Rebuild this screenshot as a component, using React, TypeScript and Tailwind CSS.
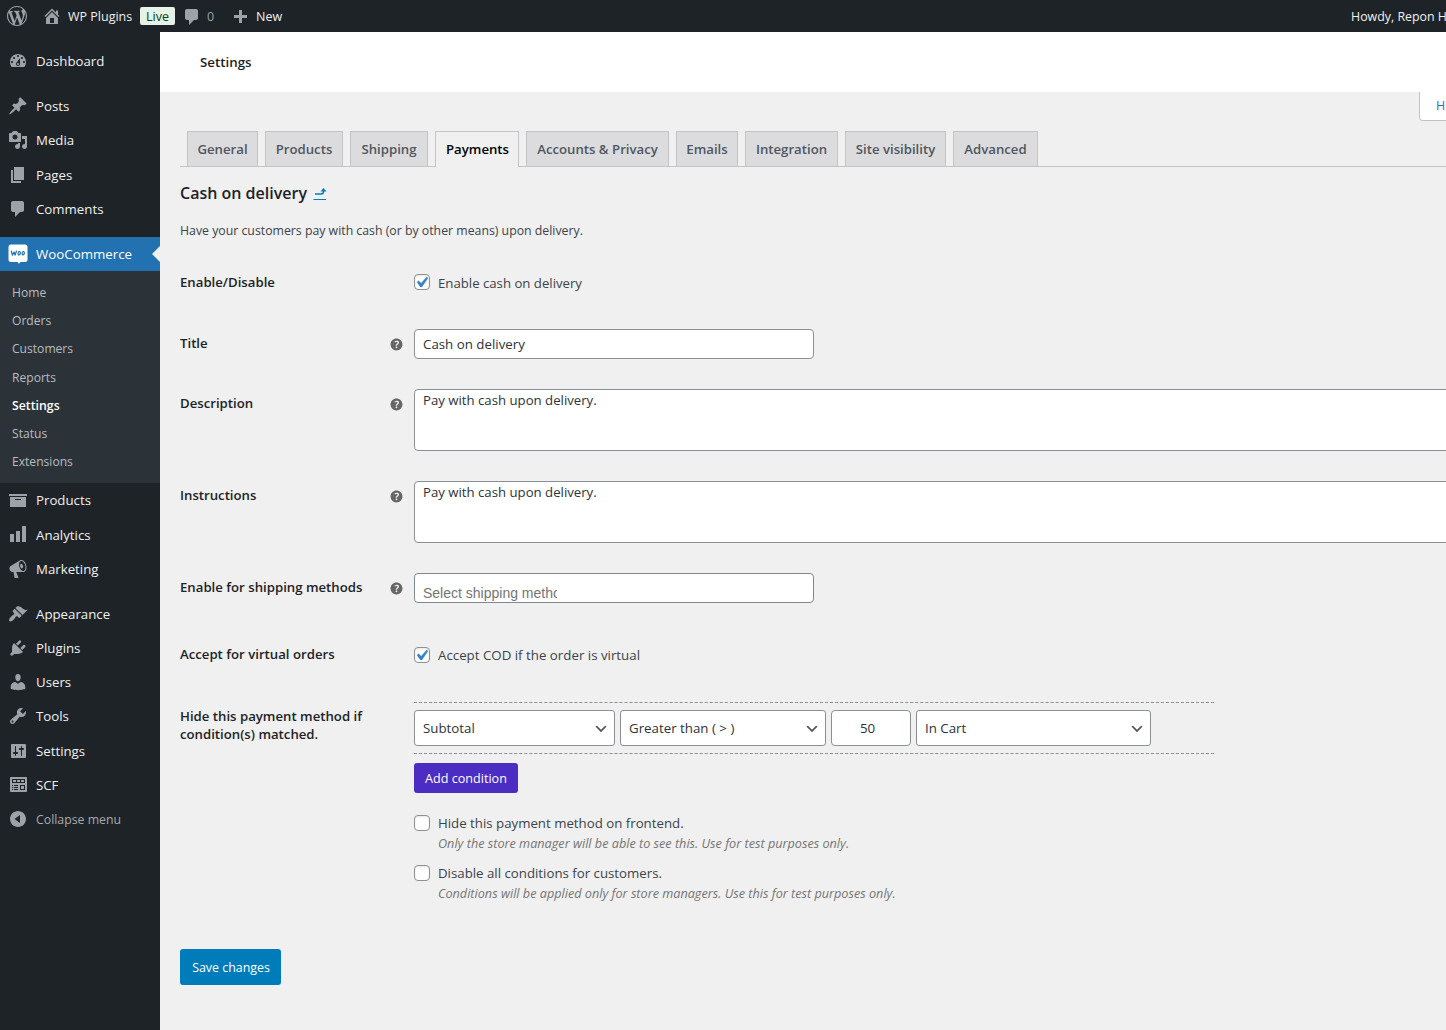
import React from 'react';
import clsx from 'clsx';

const ICONS = {
  wordpress:
    'M20 10c0-5.51-4.49-10-10-10C4.48 0 0 4.49 0 10c0 5.52 4.48 10 10 10 5.51 0 10-4.48 10-10zM7.78 15.37L4.37 6.22c.55-.02 1.17-.08 1.17-.08.5-.06.44-1.13-.06-1.11 0 0-1.45.11-2.37.11-.18 0-.37 0-.58-.01C4.12 2.69 6.87 1.11 10 1.11c2.33 0 4.45.87 6.05 2.34-.68-.11-1.65.39-1.65 1.58 0 .74.45 1.36.9 2.1.35.61.55 1.36.55 2.46 0 1.49-1.4 5-1.4 5l-3.03-8.37c.54-.02.82-.17.82-.17.5-.05.44-1.25-.06-1.22 0 0-1.44.12-2.38.12-.87 0-2.33-.12-2.33-.12-.5-.03-.56 1.2-.06 1.22l.92.08 1.26 3.41zM17.41 10c.24-.64.74-1.87.43-4.25.7 1.29 1.05 2.71 1.05 4.25 0 3.29-1.73 6.24-4.4 7.78.97-2.59 1.94-5.2 2.92-7.78zM6.1 18.09C3.12 16.65 1.11 13.53 1.11 10c0-1.3.23-2.48.72-3.59C3.25 10.3 4.67 14.2 6.1 18.09zm4.03-6.63l2.58 6.98c-.86.29-1.76.45-2.71.45-.79 0-1.57-.11-2.29-.33.81-2.38 1.62-4.74 2.42-7.1z',
  home: 'M16 8.5l1.53 1.53-1.06 1.06L10 4.6l-6.47 6.49-1.06-1.06L10 2.5l4 4v-2h2v4zm-6-2.46l6 5.99V18H4v-5.97zM12 17v-5H8v5h4z',
  comments: 'M5 2h9c1.1 0 2 .9 2 2v7c0 1.1-.9 2-2 2h-2l-5 5v-5H5c-1.1 0-2-.9-2-2V4c0-1.1.9-2 2-2z',
  plus: 'M17 9v3h-5v5H9v-5H4V9h5V4h3v5z',
  dashboard:
    'M3.76 16h12.48c1.1-1.37 1.76-3.11 1.76-5 0-4.42-3.58-8-8-8s-8 3.58-8 8c0 1.89.66 3.63 1.76 5zM10 4c.55 0 1 .45 1 1s-.45 1-1 1-1-.45-1-1 .45-1 1-1zM6 6c.55 0 1 .45 1 1s-.45 1-1 1-1-.45-1-1 .45-1 1-1zm8 0c.55 0 1 .45 1 1s-.45 1-1 1-1-.45-1-1 .45-1 1-1zm-5.37 5.55L12 7v6c0 1.1-.9 2-2 2s-2-.9-2-2c0-.57.24-1.08.63-1.45zM4 10c.55 0 1 .45 1 1s-.45 1-1 1-1-.45-1-1 .45-1 1-1zm12 0c.55 0 1 .45 1 1s-.45 1-1 1-1-.45-1-1 .45-1 1-1zm-5 3c0-.55-.45-1-1-1s-1 .45-1 1 .45 1 1 1 1-.45 1-1z',
  posts:
    'M10.44 3.02l1.82-1.82 6.36 6.35-1.83 1.82c-1.05-.68-2.48-.57-3.41.36l-.75.75c-.92.93-1.04 2.35-.35 3.41l-1.83 1.82-2.41-2.41-2.8 2.79c-.42.42-3.38 2.71-3.8 2.29s1.86-3.39 2.28-3.81l2.79-2.79L4.1 9.36l1.83-1.82c1.05.69 2.48.57 3.4-.36l.75-.75c.93-.92 1.05-2.35.36-3.41z',
  media:
    'M13 11V4c0-.55-.45-1-1-1h-1.67L9 1H5L3.67 3H2c-.55 0-1 .45-1 1v7c0 .55.45 1 1 1h10c.55 0 1-.45 1-1zM7 4.5c1.38 0 2.5 1.12 2.5 2.5S8.38 9.5 7 9.5 4.5 8.38 4.5 7 5.62 4.5 7 4.5zM14 6h5v10.5c0 1.38-1.12 2.5-2.5 2.5S14 17.88 14 16.5s1.12-2.5 2.5-2.5c.17 0 .34.02.5.05V9h-3V6zm-4 8.05V13h2v3.5c0 1.38-1.12 2.5-2.5 2.5S7 17.88 7 16.5 8.12 14 9.5 14c.17 0 .34.02.5.05z',
  pages: 'M6 15V2h10v13H6zm-1 1h8v2H3V5h2v11z',
  archive: 'M19 4v2H1V4h18zM2 7h16v10H2V7zm11 3V9H7v1h6z',
  chart: 'M18 18V2h-4v16h4zm-6 0V7H8v11h4zm-6 0v-8H2v8h4z',
  megaphone:
    'M18.15 5.94c.46 1.62.38 3.22-.02 4.48-.42 1.28-1.26 2.18-2.3 2.48-.16.06-.26.06-.4.06-.06.02-.12.02-.18.02-.06.02-.14.02-.22.02h-6.8l2.22 5.5c.02.14-.06.26-.14.34-.08.1-.24.16-.34.16H6.95c-.1 0-.26-.06-.34-.16-.08-.08-.16-.2-.14-.34l-1-5.5H4.25l-.02-.02c-.5.06-1.08-.18-1.54-.62s-.88-1.08-1.06-1.88c-.24-.8-.2-1.56-.02-2.2.18-.62.58-1.08 1.06-1.3l.02-.02 9-5.4c.1-.06.18-.1.24-.16.06-.04.14-.08.24-.12.16-.08.28-.12.5-.18 1.04-.3 2.24.1 3.22.98s1.84 2.24 2.26 3.86zm-2.58 5.98h-.02c.4-.1.74-.34 1.04-.7.58-.7.86-1.76.86-3.04 0-.64-.1-1.3-.28-1.98-.34-1.36-1.02-2.5-1.78-3.24s-1.68-1.1-2.46-.88c-.82.22-1.4.96-1.7 2-.32 1.04-.28 2.36.06 3.72.38 1.36 1 2.5 1.8 3.24.78.74 1.62 1.1 2.48.88zm-2.54-7.08c.22-.04.42-.02.62.04.38.16.76.48 1.02 1s.42 1.2.42 1.78c0 .3-.04.56-.12.8-.18.48-.44.84-.86.94-.34.1-.8-.06-1.14-.4s-.64-.86-.78-1.5c-.18-.62-.12-1.24.02-1.72s.48-.84.82-.94z',
  appearance:
    'M14.48 11.06L7.41 3.99l1.5-1.5c.5-.56 2.3-.47 3.51.32 1.21.8 1.43 1.28 2.91 2.1 1.18.64 2.45 1.26 4.45.85zm-.71.71L6.7 4.7 4.93 6.47c-.39.39-.39 1.02 0 1.41l1.06 1.06c.39.39.39 1.03 0 1.42-.6.6-1.43 1.11-2.21 1.69-.35.26-.7.53-1.01.84C1.43 14.23.4 16.08 1.4 17.07c.99 1 2.84-.03 4.18-1.36.31-.31.58-.66.85-1.02.57-.78 1.08-1.61 1.69-2.21.39-.39 1.02-.39 1.41 0l1.06 1.06c.39.39 1.02.39 1.41 0z',
  plugins:
    'M13.11 4.36L9.87 7.6 8 5.73l3.24-3.24c.35-.34 1.05-.2 1.56.32.52.51.66 1.21.31 1.55zm-8 1.77l.91-1.12 9.01 9.01-1.19.84c-.71.71-2.63 1.16-3.82 1.16H6.14L4.9 17.26c-.59.59-1.54.59-2.12 0-.59-.58-.59-1.53 0-2.12l1.24-1.24v-3.88c0-1.13.4-3.19 1.09-3.89zm7.26 3.97l3.24-3.24c.34-.35 1.04-.21 1.55.31.52.51.66 1.21.31 1.55l-3.24 3.25z',
  users:
    'M10 9.25c-2.27 0-2.73-3.44-2.73-3.44C7 4.02 7.82 2 9.97 2c2.16 0 2.98 2.02 2.71 3.81 0 0-.41 3.44-2.68 3.44zm0 2.57L12.72 10c2.39 0 4.52 2.33 4.52 4.53v2.49s-3.65 1.13-7.24 1.13c-3.65 0-7.24-1.13-7.24-1.13v-2.49c0-2.25 1.94-4.48 4.47-4.48z',
  tools:
    'M16.68 9.77c-1.34 1.34-3.3 1.67-4.95.99l-5.41 6.52c-.99.99-2.59.99-3.58 0s-.99-2.59 0-3.57l6.52-5.42c-.68-1.65-.35-3.61.99-4.95 1.28-1.28 3.12-1.62 4.72-1.06l-2.89 2.89 2.82 2.82 2.86-2.87c.53 1.58.18 3.39-1.08 4.65zM3.81 16.21c.4.39 1.04.39 1.43 0 .4-.4.4-1.04 0-1.43-.39-.4-1.03-.4-1.43 0-.39.39-.39 1.03 0 1.43z',
  settings:
    'M18 16V4c0-.55-.45-1-1-1H4c-.55 0-1 .45-1 1v12c0 .55.45 1 1 1h13c.55 0 1-.45 1-1zM8 11h1c.55 0 1 .45 1 1s-.45 1-1 1H8v1.5c0 .28-.22.5-.5.5s-.5-.22-.5-.5V13H6c-.55 0-1-.45-1-1s.45-1 1-1h1V5.5c0-.28.22-.5.5-.5s.5.22.5.5V11zm5-2h-1c-.55 0-1-.45-1-1s.45-1 1-1h1V5.5c0-.28.22-.5.5-.5s.5.22.5.5V7h1c.55 0 1 .45 1 1s-.45 1-1 1h-1v5.5c0 .28-.22.5-.5.5s-.5-.22-.5-.5V9z',
  scf: 'M19 16V3c0-.55-.45-1-1-1H3c-.55 0-1 .45-1 1v13c0 .55.45 1 1 1h15c.55 0 1-.45 1-1zM4 4h13v4H4V4zm1 1v2h3V5H5zm4 0v2h3V5H9zm4 0v2h3V5h-3zM4 10h1v1H4v-1zm2 0h4v1H6v-1zm6 0h5v5h-5v-5zm-8 2h1v1H4v-1zm2 0h4v1H6v-1zm7-1v3h3v-3h-3zm-9 3h1v1H4v-1zm2 0h4v1H6v-1z',
  collapse: 'M10 2c4.42 0 8 3.58 8 8s-3.58 8-8 8-8-3.58-8-8 3.58-8 8-8zm2 12V6l-5.5 4z',
  help: 'M17 10c0-3.87-3.14-7-7-7-3.87 0-7 3.13-7 7s3.13 7 7 7c3.86 0 7-3.13 7-7zm-6.3 1.48H9.14v-.43c0-.38.08-.7.24-.98s.46-.57.88-.89c.41-.29.68-.53.81-.71.14-.18.2-.39.2-.62 0-.25-.09-.44-.28-.58-.19-.13-.45-.19-.79-.19-.58 0-1.25.19-2 .57l-.64-1.28c.87-.49 1.8-.74 2.77-.74.81 0 1.45.2 1.92.58.48.39.71.91.71 1.55 0 .43-.09.8-.29 1.11-.19.32-.57.67-1.11 1.06-.38.28-.61.49-.71.63-.1.15-.15.34-.15.57v.35zm-1.47 2.74c-.18-.17-.27-.42-.27-.73 0-.33.08-.58.26-.75s.43-.25.77-.25c.32 0 .57.09.75.26s.27.42.27.74c0 .3-.09.55-.27.72-.18.18-.43.27-.75.27-.33 0-.58-.09-.76-.26z',
};

type IconName = keyof typeof ICONS;

function Dashicon({ name, className }: { name: IconName; className?: string }) {
  return (
    <svg viewBox="0 0 20 20" className={clsx('shrink-0', className ?? 'h-5 w-5 fill-[#9ca2a7]')}>
      <path fillRule="evenodd" d={ICONS[name]} />
    </svg>
  );
}

function WooIcon() {
  return (
    <svg viewBox="0 0 20 20" className="h-5 w-5 shrink-0">
      <path fill="#fff" d="M3 .5h14A2.500 2.500 0 0 1 19.500 3v12.500A2.500 2.500 0 0 1 17 18h-4.500L11 19.700 9.500 18H3a2.500 2.500 0 0 1-2.500-2.500V3A2.500 2.500 0 0 1 3 .5z" />
      <g fill="none" stroke="#2271b1" strokeWidth="1.200" strokeLinecap="round" strokeLinejoin="round">
        <path d="M3.300 7l1.100 4.200L6.100 8l.9 3.200L8.500 7" />
        <ellipse cx="11.200" cy="9.200" rx="1.100" ry="1.700" transform="rotate(15 11.200 9.200)" />
        <ellipse cx="15.200" cy="9.200" rx="1.100" ry="1.700" transform="rotate(15 15.200 9.200)" />
      </g>
    </svg>
  );
}

function AdminBar() {
  return (
    <header className="flex h-8 shrink-0 items-center bg-[#1d2327] pl-[7px] text-[12.5px] whitespace-nowrap text-[#f0f0f1]">
      <Dashicon name="wordpress" />
      <Dashicon name="home" className="ml-[15px] h-5 w-5 fill-[#9ca2a7]" />
      <span className="ml-[6px] w-[65px] pt-0.5">WP Plugins</span>
      <span className="ml-[7px] flex h-[18px] w-[35px] items-center justify-center rounded-[2px] bg-[#e6f2e8] pt-0.5 text-[#00450c]">Live</span>
      <Dashicon name="comments" className="mt-px ml-[7px] h-5 w-5 fill-[#9ca2a7]" />
      <span className="ml-[5px] w-2 pt-0.5 text-[#9ca2a7]">0</span>
      <Dashicon name="plus" className="ml-[15px] h-5 w-5 fill-[#9ca2a7]" />
      <span className="ml-[6px] pt-0.5">New</span>
      <span className="ml-auto w-[95px] pt-0.5 text-[12.4px]">Howdy, Repon H</span>
    </header>
  );
}

const SUBMENU = ['Home', 'Orders', 'Customers', 'Reports', 'Settings', 'Status', 'Extensions'];

function MenuItem({ icon, label, muted }: { icon: IconName; label: string; muted?: boolean }) {
  return (
    <li className="flex h-[34.250px] items-center">
      <span className="flex w-9 justify-center">
        <Dashicon name={icon} />
      </span>
      <span className={clsx('pt-0.5', muted ? 'text-[12.3px] text-[#a7aaad]' : 'text-[#f0f0f1]')}>{label}</span>
    </li>
  );
}

function Sidebar() {
  return (
    <nav className="w-40 shrink-0 bg-[#1d2327] pt-3 text-[13.25px]">
      <ul>
        <MenuItem icon="dashboard" label="Dashboard" />
      </ul>
      <ul className="mt-[10.750px]">
        <MenuItem icon="posts" label="Posts" />
        <MenuItem icon="media" label="Media" />
        <MenuItem icon="pages" label="Pages" />
        <MenuItem icon="comments" label="Comments" />
      </ul>
      <div className="relative mt-[11px] flex h-[34.200px] items-center bg-[#2271b1] text-[13.3px] text-white">
        <span className="flex w-9 justify-center">
          <WooIcon />
        </span>
        <span className="pt-0.5">WooCommerce</span>
        <span className="absolute top-[9px] right-0 border-y-8 border-r-8 border-y-transparent border-r-[#f0f0f0]" />
      </div>
      <ul className="bg-[#2c3338] pt-[7.300px] pb-[7px] pl-3 text-[12.1px] text-[#b5bcc2]">
        {SUBMENU.map((item) => (
          <li key={item} className={clsx('flex h-[28.200px] items-center pt-px', item === 'Settings' && 'text-[12.3px] font-semibold text-white')}>
            {item}
          </li>
        ))}
      </ul>
      <ul className="pt-[0.300px]">
        <MenuItem icon="archive" label="Products" />
        <MenuItem icon="chart" label="Analytics" />
        <MenuItem icon="megaphone" label="Marketing" />
      </ul>
      <ul className="mt-[10.700px]">
        <MenuItem icon="appearance" label="Appearance" />
        <MenuItem icon="plugins" label="Plugins" />
        <MenuItem icon="users" label="Users" />
        <MenuItem icon="tools" label="Tools" />
        <MenuItem icon="settings" label="Settings" />
        <MenuItem icon="scf" label="SCF" />
        <MenuItem icon="collapse" label="Collapse menu" muted />
      </ul>
    </nav>
  );
}

const TABS = [
  { label: 'General', width: 'w-[71px]' },
  { label: 'Products', width: 'w-[78px]' },
  { label: 'Shipping', width: 'w-[78px]' },
  { label: 'Payments', width: 'w-[84px]' },
  { label: 'Accounts & Privacy', width: 'w-[143px]' },
  { label: 'Emails', width: 'w-[62px]' },
  { label: 'Integration', width: 'w-[93px]' },
  { label: 'Site visibility', width: 'w-[101px]' },
  { label: 'Advanced', width: 'w-[85px]' },
];

function Tabs() {
  return (
    <div className="flex h-9 gap-[7px] border-b border-[#c3c4c7] pl-[7px]">
      {TABS.map(({ label, width }) => (
        <div
          key={label}
          className={clsx(
            'flex shrink-0 items-center justify-center border border-b-0 border-[#c3c4c7] pt-0.5 text-[13.2px] font-semibold whitespace-nowrap',
            width,
            label === 'Payments' ? '-mb-px bg-[#f0f0f0] pb-px pl-px text-black' : 'bg-[#dcdcde] text-[#50575e]',
          )}
        >
          {label}
        </div>
      ))}
    </div>
  );
}

function Checkbox({ checked }: { checked?: boolean }) {
  return (
    <span className="flex h-4 w-4 shrink-0 items-center justify-center rounded-[4px] border border-[#8c8f94] bg-white shadow-[inset_0_1px_2px_rgba(0,0,0,0.1)]">
      {checked && (
        <svg viewBox="0 0 20 20" className="-mr-[3px] -ml-[4px] h-[21px] w-[21px] shrink-0 fill-[#3582c4] stroke-[#3582c4] stroke-[0.4]">
          <path d="M14.830 4.890l1.340.940-5.810 8.380H9.020L5.780 9.670l1.340-1.250 2.570 2.400z" />
        </svg>
      )}
    </span>
  );
}

function FormRow({ label, help, className, children }: { label: React.ReactNode; help?: boolean; className?: string; children: React.ReactNode }) {
  return (
    <div className={clsx('flex items-start', className)}>
      <div className="flex w-[234px] shrink-0 items-start pt-[5px]">
        <span className="flex-1 text-[13.2px] leading-[18px] font-semibold whitespace-nowrap text-[#1d2327]">{label}</span>
        {help && <Dashicon name="help" className="mt-[2px] mr-[9px] h-[17px] w-[17px] fill-[#666]" />}
      </div>
      {children}
    </div>
  );
}

function Select({ value, width }: { value: string; width: string }) {
  return (
    <div className={clsx('flex h-9 shrink-0 items-center justify-between rounded-[3px] border border-[#8c8f94] bg-white pr-[5px] pl-2 text-[13.3px] text-[#2c3338]', width)}>
      <span className="pt-0.5">{value}</span>
      <svg viewBox="0 0 20 20" className="mt-px h-4 w-4 fill-[#555]">
        <path d="M5 6l5 5 5-5 2 1-7 7-7-7 2-1z" />
      </svg>
    </div>
  );
}

function Option({ label, hint, className }: { label: string; hint: string; className?: string }) {
  return (
    <div className={clsx('flex items-start', className)}>
      <Checkbox />
      <div className="ml-2">
        <p className="text-[13.25px] leading-[17px] text-[#3c434a]">{label}</p>
        <p className="mt-[2px] text-[12.67px] leading-[18px] text-[#757575] italic">{hint}</p>
      </div>
    </div>
  );
}

function Textarea({ value }: { value: string }) {
  return (
    <div className="h-[62px] w-[1100px] shrink-0 rounded-[4px] border border-[#8c8f94] bg-white px-2 text-[13.2px] leading-5 text-[#2c3338]">
      {value}
    </div>
  );
}

function SettingsPage() {
  return (
    <main className="relative flex min-w-0 flex-1 flex-col overflow-hidden bg-[#f0f0f0]">
      <div className="flex h-[60px] shrink-0 items-center bg-white pt-0.5 pl-10 text-[13.3px] font-semibold text-[#1e1e1e]">Settings</div>
      {/* Contextual help toggle hangs below the page header */}
      <div className="absolute top-[60px] -right-10 flex h-[29px] w-[67px] items-center rounded-bl-[4px] border border-t-0 border-[#c3c4c7] bg-white pl-4 text-[12.4px] text-[#2271b1]">
        Help
      </div>

      <div className="pt-[39px] pl-5">
        <Tabs />
        <h2 className="mt-[14px] flex h-6 items-center text-[16px] font-semibold text-[#1d2327]">
          Cash on delivery
          <svg viewBox="0 0 14 14" className="mt-[2px] ml-[6px] h-[14px] w-[14px]" fill="none" stroke="#007cba">
            <path d="M2 7h6q2.500 0 2.500-2.500V4" strokeWidth="1.400" />
            <path d="M7.500 4.500L10.500 1l3 3.500z" fill="#007cba" stroke="none" />
            <path d="M.5 12.500h12.500" />
          </svg>
        </h2>
        <p className="mt-[17px] text-[12.3px] leading-[18px] text-[#3c434a]">Have your customers pay with cash (or by other means) upon delivery.</p>

        <form className="mt-[28px]">
          <FormRow label="Enable/Disable" className="h-[61px]">
            <div className="flex pt-[6px]">
              <Checkbox checked />
              <span className="ml-2 text-[13.2px] leading-[18px] text-[#3c434a]">Enable cash on delivery</span>
            </div>
          </FormRow>
          <FormRow label="Title" help className="h-[60px]">
            <div className="flex h-[30px] w-[400px] items-center rounded-[4px] border border-[#8c8f94] bg-white px-2 pt-0.5 text-[13.3px] text-[#2c3338]">
              Cash on delivery
            </div>
          </FormRow>
          <FormRow label="Description" help className="h-[92px]">
            <Textarea value="Pay with cash upon delivery." />
          </FormRow>
          <FormRow label="Instructions" help className="h-[92px]">
            <Textarea value="Pay with cash upon delivery." />
          </FormRow>
          <FormRow label="Enable for shipping methods" help className="h-[67px]">
            <div className="h-[30px] w-[400px] overflow-hidden rounded-[4px] border border-[#7e8993] bg-white pt-[9px] pl-2">
              <div className="w-[134px] overflow-hidden font-['Liberation_Sans',sans-serif] text-[14px] leading-5 whitespace-nowrap text-[#757575]">
                Select shipping method
              </div>
            </div>
          </FormRow>
          <FormRow label="Accept for virtual orders" className="h-[62px]">
            <div className="flex pt-[7px]">
              <Checkbox checked />
              <span className="ml-2 text-[13.3px] leading-[17px] text-[#3c434a]">Accept COD if the order is virtual</span>
            </div>
          </FormRow>
          <FormRow
            label={
              <>
                Hide this payment method if
                <br />
                condition(s) matched.
              </>
            }
          >
            <div>
              <div className="flex w-[800px] gap-[5px] border-y border-dashed border-[#8c8f94] py-[7px]">
                <Select value="Subtotal" width="w-[201px]" />
                <Select value="Greater than ( > )" width="w-[206px]" />
                <div className="flex h-9 w-20 items-center justify-center rounded-[4px] border border-[#8c8f94] bg-white pt-0.5 pr-[7px] text-[13.3px] text-[#2c3338]">
                  50
                </div>
                <Select value="In Cart" width="w-[235px]" />
              </div>
              <button type="button" className="mt-[9px] block h-[30px] w-[104px] rounded-[3px] bg-[#4b2dc3] pt-0.5 text-[12.6px] text-white">
                Add condition
              </button>
              <Option
                className="mt-[22px]"
                label="Hide this payment method on frontend."
                hint="Only the store manager will be able to see this. Use for test purposes only."
              />
              <Option
                className="mt-[13px]"
                label="Disable all conditions for customers."
                hint="Conditions will be applied only for store managers. Use this for test purposes only."
              />
            </div>
          </FormRow>
          <button type="button" className="mt-[47px] block h-9 w-[101px] rounded-[3px] bg-[#007cba] pt-0.5 pl-px text-[12.4px] text-white">
            Save changes
          </button>
        </form>
      </div>
    </main>
  );
}

export default function App() {
  return (
    <div className="flex h-[1030px] w-full flex-col overflow-hidden font-['Open_Sans','Noto_Sans',sans-serif]">
      <AdminBar />
      <div className="flex min-h-0 flex-1">
        <Sidebar />
        <SettingsPage />
      </div>
    </div>
  );
}
